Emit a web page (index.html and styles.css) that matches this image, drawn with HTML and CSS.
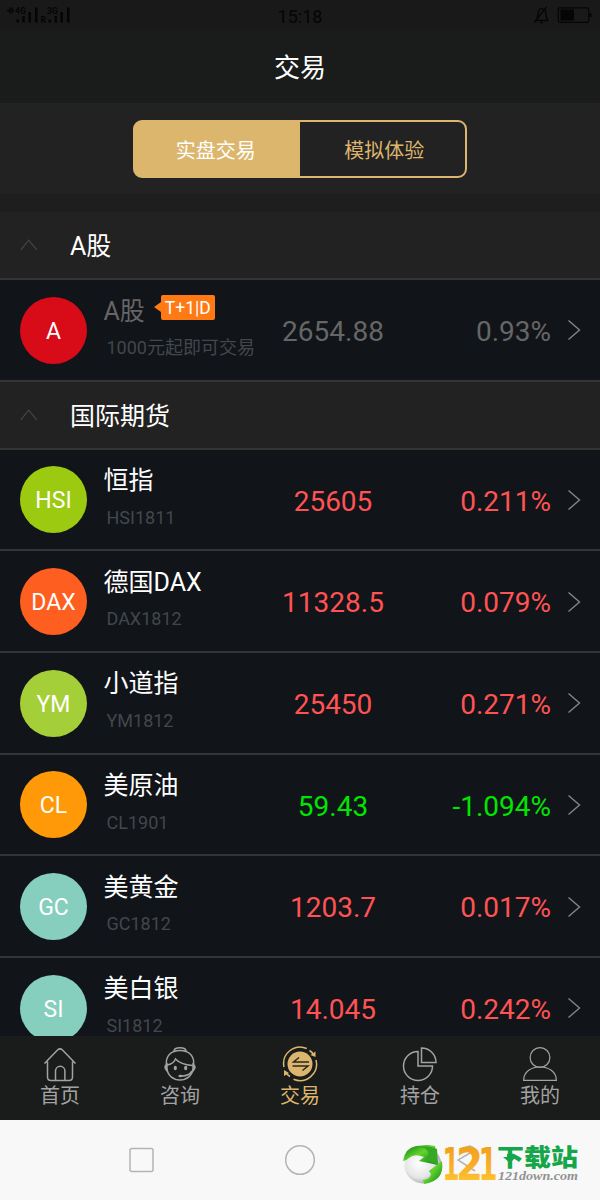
FILE: index.html
```html
<!DOCTYPE html>
<html lang="zh-CN">
<head>
<meta charset="utf-8">
<title>交易</title>
<link rel="stylesheet" href="styles.css">
</head>
<body>
<div class="screen">
  <div class="status">
    <svg class="signal" width="72" height="28" viewBox="0 0 72 28">
      <path d="M7 10.5h3M10 7.5v6M12 7.5v6M12 10.5h2" stroke="#050505" stroke-width="1.3" fill="none"/>
      <path d="M16.5 19.5h2.5v3h-2.5zM22.3 16h2.5v6.500h-2.5zM28.500 12h2.500v10.500h-2.500zM35 7.500h2.500v15h-2.500zM48.500 19.500h2.500v3h-2.500zM54.500 16h2.500v6.500h-2.500zM60.500 12h2.500v10.500h-2.500zM67 7.500h2.500v15h-2.500z" fill="#050505"/>
      <text class="net" x="15" y="13.500">4G</text>
      <text class="net" x="40.500" y="22.500">R</text>
      <text class="net" x="47" y="13.500">3G</text>
    </svg>
    <span class="time">15:18</span>
    <svg class="battery" width="62" height="28" viewBox="0 0 62 28" fill="none" stroke="#050505">
      <path d="M4 20.500h13.500M5.500 20c1.500-2 1-9 3-10.500 2-1.500 5-1 6 2 .500 3 .500 7 2.500 9M3 22.500L15.500 7M9 22.500h3" stroke-width="1.300"/>
      <rect x="27.300" y="7.800" width="30.500" height="14.500" rx="1.500" stroke-width="1.200"/>
      <path d="M29.500 9.500h13.500v11H29.500zM58.500 13h2v4h-2z" fill="#050505" stroke="none"/>
    </svg>
  </div>
  <header class="title">交易</header>
  <div class="switch-bar">
    <div class="switch"><div class="seg seg-on">实盘交易</div><div class="seg">模拟体验</div></div>
  </div>
  <main class="list">
    <div class="group"><svg class="up" width="18" height="12" viewBox="0 0 18 12"><path d="M.8 10.800L8.700 1.200l8 9.600"/></svg><span>A股</span></div>
    <div class="row muted">
      <div class="badge red">A</div>
      <div class="info"><div class="name">A股<span class="tag">T+1|D</span></div><div class="code">1000元起即可交易</div></div>
      <div class="price">2654.88</div><div class="rate">0.93%</div>
      <svg class="go" width="14" height="22" viewBox="0 0 14 22"><path d="M1.500 1.500l11 9.500-11 9.500"/></svg>
    </div>
    <div class="group"><svg class="up" width="18" height="12" viewBox="0 0 18 12"><path d="M.8 10.800L8.700 1.200l8 9.600"/></svg><span>国际期货</span></div>
    <div class="row">
      <div class="badge lime">HSI</div>
      <div class="info"><div class="name">恒指</div><div class="code">HSI1811</div></div>
      <div class="price">25605</div><div class="rate">0.211%</div>
      <svg class="go" width="14" height="22" viewBox="0 0 14 22"><path d="M1.500 1.500l11 9.500-11 9.500"/></svg>
    </div>
    <div class="row">
      <div class="badge orange">DAX</div>
      <div class="info"><div class="name">德国DAX</div><div class="code">DAX1812</div></div>
      <div class="price">11328.5</div><div class="rate">0.079%</div>
      <svg class="go" width="14" height="22" viewBox="0 0 14 22"><path d="M1.500 1.500l11 9.500-11 9.500"/></svg>
    </div>
    <div class="row">
      <div class="badge green">YM</div>
      <div class="info"><div class="name">小道指</div><div class="code">YM1812</div></div>
      <div class="price">25450</div><div class="rate">0.271%</div>
      <svg class="go" width="14" height="22" viewBox="0 0 14 22"><path d="M1.500 1.500l11 9.500-11 9.500"/></svg>
    </div>
    <div class="row down">
      <div class="badge amber">CL</div>
      <div class="info"><div class="name">美原油</div><div class="code">CL1901</div></div>
      <div class="price">59.43</div><div class="rate">-1.094%</div>
      <svg class="go" width="14" height="22" viewBox="0 0 14 22"><path d="M1.500 1.500l11 9.500-11 9.500"/></svg>
    </div>
    <div class="row">
      <div class="badge teal">GC</div>
      <div class="info"><div class="name">美黄金</div><div class="code">GC1812</div></div>
      <div class="price">1203.7</div><div class="rate">0.017%</div>
      <svg class="go" width="14" height="22" viewBox="0 0 14 22"><path d="M1.500 1.500l11 9.500-11 9.500"/></svg>
    </div>
    <div class="row">
      <div class="badge teal">SI</div>
      <div class="info"><div class="name">美白银</div><div class="code">SI1812</div></div>
      <div class="price">14.045</div><div class="rate">0.242%</div>
      <svg class="go" width="14" height="22" viewBox="0 0 14 22"><path d="M1.500 1.500l11 9.500-11 9.500"/></svg>
    </div>
  </main>
  <nav class="tabs">
    <div class="tab">
      <svg width="36" height="36" viewBox="0 0 36 36"><path d="M2.500 17.500L15.500 4q2.500-2.200 5 0L33.500 17.500M5.500 15.500V31q0 3.500 3.500 3.500h18q3.500 0 3.500-3.500V15.500M13.500 34.500V25a4.700 4.700 0 0 1 9.400 0v9.500"/></svg>
      <span>首页</span>
    </div>
    <div class="tab">
      <svg width="36" height="36" viewBox="0 0 36 36"><path d="M4.500 20C3 10 9 4.500 18 4.500s15 5.500 13.500 15.500M12 5C12 .500 24 .500 24 5M5 23c1 7 6.500 11 13 11s12-4 13-11M5 19q6.500-1 8.500-6 5 5.500 17 6.500"/><path d="M5 18q-4 3 0 7zM31 18q4 3 0 7z" fill="#a2a2a2"/><path d="M30 25q-3 5-10 5"/><ellipse cx="13.300" cy="22" rx="1.600" ry="2.200" class="dot"/><ellipse cx="23.700" cy="22" rx="1.600" ry="2.200" class="dot"/><ellipse cx="18.500" cy="30" rx="2.200" ry="1.300" class="dot"/></svg>
      <span>咨询</span>
    </div>
    <div class="tab active">
      <svg width="36" height="36" viewBox="0 0 36 36"><circle cx="18" cy="18" r="12.500" fill="#dcb66d" stroke="none"/><path d="M24.800 2.500A16.500 16.500 0 0 0 2 21M4 27a16.500 16.500 0 0 0 4 3.500M11.500 33.200A16.500 16.500 0 0 0 34 14M27.500 4.500q2.500 1.500 4 4"/><path d="M33.500 5.500v5.500l-5-2zM2 30v-6l5 3z" fill="#dcb66d" stroke="none"/><path d="M27 16H11.500L17 11.500M10.500 20H26l-5.500 4.500" stroke="#292820" stroke-width="1.500"/></svg>
      <span>交易</span>
    </div>
    <div class="tab">
      <svg width="36" height="36" viewBox="0 0 36 36"><path d="M16 5.500A14.500 14.500 0 1 0 30.500 20H16zM19.500 2v14.500H34A14.500 14.500 0 0 0 19.500 2z"/></svg>
      <span>持仓</span>
    </div>
    <div class="tab">
      <svg width="36" height="36" viewBox="0 0 36 36"><g stroke-width="1.200"><circle cx="18" cy="11.500" r="9.900"/><path d="M1.600 34.400C1.600 16.500 34.400 16.500 34.400 34.400z"/></g></svg>
      <span>我的</span>
    </div>
  </nav>
  <footer class="system">
    <svg width="600" height="80" viewBox="0 0 600 80">
      <defs>
        <linearGradient id="gold" x1="0" y1="0" x2="0" y2="1"><stop offset="0" stop-color="#ee9c18"/><stop offset=".5" stop-color="#f8ad25"/><stop offset="1" stop-color="#ffcf3b"/></linearGradient>
        <radialGradient id="ball" cx=".4" cy=".45" r=".65"><stop offset="0" stop-color="#fff"/><stop offset=".6" stop-color="#e6e6e6"/><stop offset="1" stop-color="#999"/></radialGradient>
        <linearGradient id="leaf" x1="0" y1="0" x2="1" y2="1"><stop offset="0" stop-color="#087511"/><stop offset=".45" stop-color="#62d52c"/><stop offset="1" stop-color="#078018"/></linearGradient>
      </defs>
      <rect x="130" y="28.500" width="23" height="23" rx="2" class="key"/>
      <circle cx="300" cy="40" r="14.300" class="key"/>
      <path d="M475 30l-17 10 17 11M463 28l7-2 4 2" class="key"/>
      <circle cx="423" cy="45" r="18.500" fill="url(#ball)"/>
      <path d="M403 41Q405 28 416 26l12-1 7 1 3 19-19-4 5-4q-10-4-15 1-3 3-6 3z" fill="url(#leaf)"/>
      <path d="M418 27q9 0 11 7l-5 5 14 6-1-16q-9-4-19-2z" fill="#35a824"/>
      <path d="M442 41q3 20-18 23l-1-4q8-1 8-6l-2-3z" fill="url(#leaf)"/>
      <text x="442.500" y="60" class="logo-num" textLength="17" lengthAdjust="spacingAndGlyphs">1</text>
      <text x="456" y="60" class="logo-num" textLength="27" lengthAdjust="spacingAndGlyphs">2</text>
      <text x="478.500" y="60" class="logo-num" textLength="19" lengthAdjust="spacingAndGlyphs">1</text>
      <text x="497" y="45.500" class="logo-name" textLength="81" lengthAdjust="spacingAndGlyphs">下载站</text>
      <path d="M503 37h4v-3h5v3h4l-6 6z" fill="#15a64a"/>
      <text x="498" y="60" class="logo-url" textLength="80" lengthAdjust="spacingAndGlyphs">121down.com</text>
    </svg>
  </footer>
</div>
</body>
</html>
```

FILE: styles.css
```css
* { box-sizing: border-box; }
body { margin: 0; font-family: Roboto, "Noto Sans CJK SC", sans-serif; background: #111419; }
svg { display: block; fill: none; }
.screen { width: 600px; height: 1200px; display: flex; flex-direction: column; overflow: hidden; }
.status { height: 28px; flex: none; background: #191919; display: grid; grid-template-columns: 1fr auto 1fr; color: #050505; }
.battery { justify-self: end; margin-right: 7.5px; }
.time { font-size: 18px; line-height: 33px; }
.net { font: 700 8.5px Roboto, sans-serif; fill: #050505; }
.title { height: 75px; flex: none; background: #1a1c1b; color: #fff; font-size: 26px; line-height: 80px; text-align: center; }
.switch-bar { height: 109px; flex: none; padding-top: 17px; background: #222; border-bottom: 18px solid #1e1e1e; }
.switch { width: 334px; height: 58px; margin: 0 auto; display: flex; border: 2px solid #dcb66d; border-radius: 9px; background: linear-gradient(90deg, #dcb66d 50%, transparent 50%) border-box; }
.seg { flex: 1; color: #dcb66d; font-size: 20px; line-height: 58px; text-align: center; padding-left: 7px; }
.seg-on { color: #fff; padding: 0; }
.list { flex: 1; min-height: 0; overflow: hidden; }
.group { height: 68px; display: flex; align-items: center; gap: 32px; padding: 0 20px; background: #222; border-bottom: 2px solid #343434; color: #fff; font-size: 25px; }
.group span { margin-top: -2px; }
.up { stroke: #3f464b; stroke-width: 1.3; }
.row { height: 101.67px; display: grid; grid-template-columns: 83.5px 162.500px 134px 151px 30px; align-items: center; padding: 1px 0 0 20px; background: #111419; border-bottom: 2px solid #343434; color: #ff5353; }
.go { justify-self: end; stroke: #858585; stroke-width: 1.4; }
.badge { width: 67px; height: 67px; border-radius: 50%; color: #fff; font-size: 23px; line-height: 70px; text-align: center; }
.red { background: #d80c18; }
.lime { background: #9bca10; }
.orange { background: #ff5e21; }
.green { background: #a5cf38; }
.amber { background: #ff9908; }
.teal { background: #86cebd; }
.info { align-self: start; padding-top: 9px; white-space: nowrap; }
.name { height: 37px; display: flex; align-items: center; font-size: 25px; color: #fff; }
.code { height: 37px; padding-left: 3px; font-size: 18px; line-height: 41.5px; color: #43474b; }
.tag { position: relative; width: 54px; height: 25px; margin: -2px 0 0 16px; border-radius: 2px; background: #ff7914; color: #fff; font-size: 17.5px; line-height: 27px; text-align: center; }
.tag::before { content: ""; position: absolute; left: -7px; top: 7px; border: solid transparent; border-width: 5px 7px 5px 0; border-right-color: #ff7914; }
.price, .rate { font-size: 28px; line-height: 34px; padding-top: 3.5px; white-space: nowrap; }
.price { text-align: center; }
.rate { text-align: right; }
.muted, .muted .name { color: #666; }
.muted .tag { color: #fff; }
.down { color: #00e600; }
.tabs { height: 84px; flex: none; display: grid; grid-template-columns: repeat(5, 1fr); background: #1a1c1b; }
.tab { display: flex; flex-direction: column; align-items: center; padding-top: 10px; color: #a2a2a2; font-size: 20px; line-height: 29px; }
.tab svg { stroke: #a2a2a2; stroke-width: 1.5; }
.tab .dot { fill: #a2a2a2; stroke: none; }
.active { color: #dcb66d; }
.active svg { stroke: #dcb66d; }
.system { height: 80px; flex: none; background: #f8f8f8; }
.key { stroke: #b4b4b4; stroke-width: 1.5; }
.logo-num { font: 700 45px "DejaVu Sans", sans-serif; fill: url(#gold); }
.logo-name { font: 900 24px "Noto Sans CJK SC", sans-serif; fill: #15a64a; }
.logo-url { font: italic 700 13px "Liberation Serif", serif; fill: #929292; }
```
